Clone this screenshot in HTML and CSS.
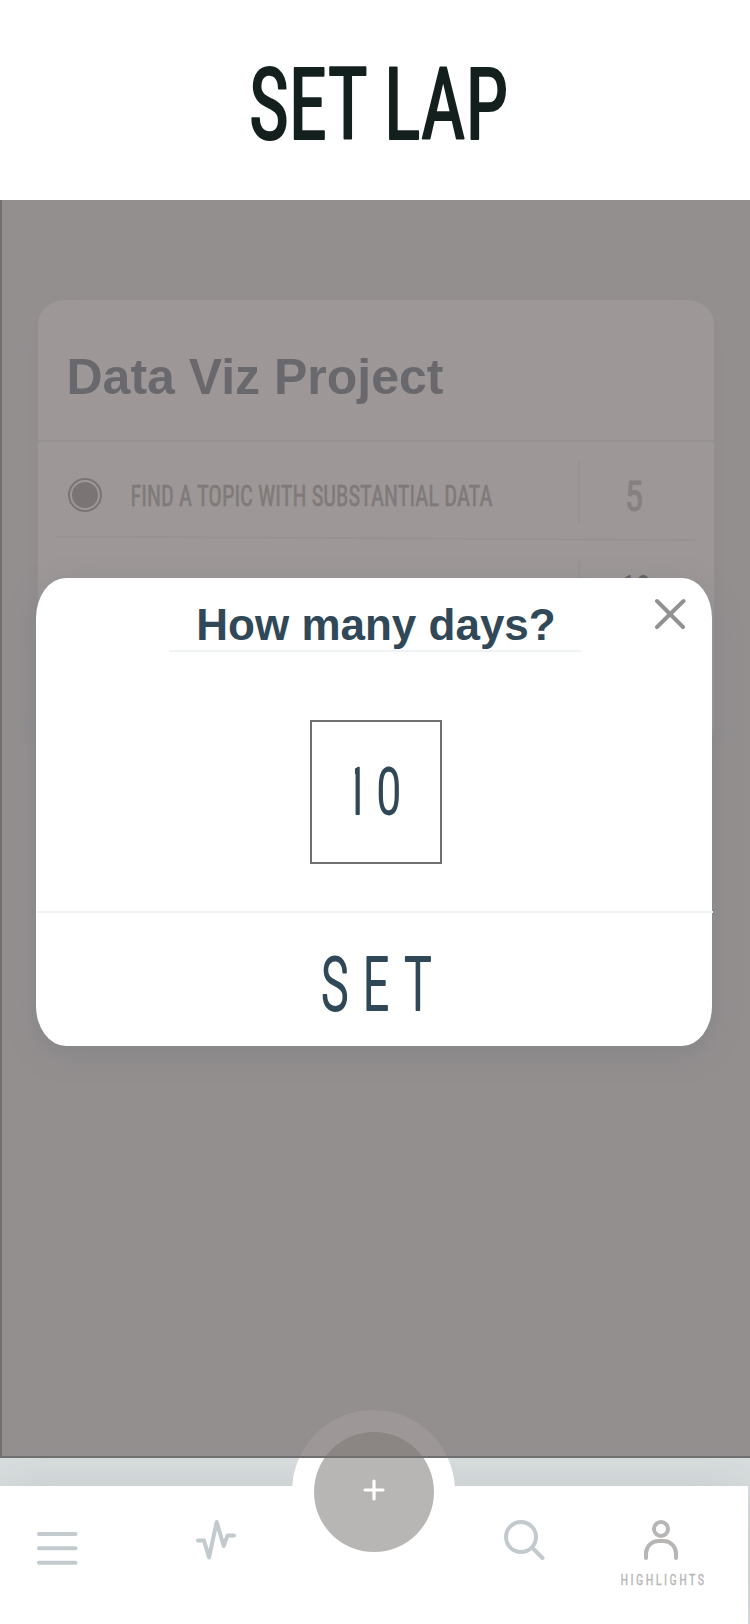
FILE: index.html
```
<!DOCTYPE html>
<html lang="en">
<head>
<meta charset="utf-8">
<title>Set Lap</title>
<link rel="stylesheet" href="styles.css">
</head>
<body>
<div class="screen">
  <header class="header">
    <svg class="label label-title" width="259" height="100" viewBox="0 0 259 100"><text x="0" y="89" textLength="259" lengthAdjust="spacingAndGlyphs">SET LAP</text></svg>
  </header>

  <main class="board">
    <section class="card">
      <h2 class="card-title">Data Viz Project</h2>
      <div class="row">
        <svg class="radio" width="34" height="34" viewBox="0 0 34 34"><circle cx="17" cy="17" r="16"/><circle class="dot" cx="17" cy="17" r="13"/></svg>
        <svg class="label label-task" width="364" height="34" viewBox="0 0 364 34"><text x="0.500" y="27.500" textLength="362" lengthAdjust="spacingAndGlyphs">FIND A TOPIC WITH SUBSTANTIAL DATA</text></svg>
        <div class="days"><svg class="label label-days" width="18" height="44" viewBox="0 0 18 44"><text x="-1" y="38" textLength="18" lengthAdjust="spacingAndGlyphs">5</text></svg></div>
      </div>
      <svg class="rule" width="640" height="6" viewBox="0 0 640 6"><path d="M0 0.500L640 4"/></svg>
      <div class="row row-next">
        <div class="days"><svg class="label label-days dark" width="30" height="44" viewBox="0 0 30 44"><text x="-2" y="36" textLength="31" lengthAdjust="spacingAndGlyphs">10</text></svg></div>
      </div>
    </section>
  </main>

  <nav class="nav">
    <svg class="icon menu" width="42" height="34" viewBox="0 0 42 34"><path d="M3 3H39.500M3 17.300H39.500M3 31.700H39.500"/></svg>
    <svg class="icon pulse" width="42" height="42" viewBox="0 0 42 42"><path d="M3 21.500H9L14 38.500L21.700 3L28.700 27L32.500 16.500H39"/></svg>
    <div class="fab">
      <div class="fab-button"><svg width="24" height="24" viewBox="0 0 24 24"><path d="M12 3V21M3 12H21"/></svg></div>
    </div>
    <svg class="icon search" width="42" height="42" viewBox="0 0 42 42"><circle cx="18" cy="18" r="15"/><path d="M29 28.500L39.500 39"/></svg>
    <div class="profile">
      <svg class="icon" width="36" height="42" viewBox="0 0 36 42"><circle cx="18" cy="10" r="7"/><path d="M3 39V34.500A12.500 12.500 0 0 1 15.500 22H20.500A12.500 12.500 0 0 1 33 34.500V39"/></svg>
      <svg class="label label-nav" width="86" height="18" viewBox="0 0 86 18"><text x="1.500" y="13" textLength="86" lengthAdjust="spacingAndGlyphs">HIGHLIGHTS</text></svg>
    </div>
  </nav>

  <div class="overlay">
    <section class="modal">
      <svg class="close" width="32" height="32" viewBox="0 0 32 32"><path d="M3 3L29 29M29.500 3L3 29"/></svg>
      <h2 class="modal-title">How many days?</h2>
      <div class="input">
        <svg class="label label-value" width="65" height="60" viewBox="0 0 65 60"><text x="0" y="52.500" textLength="65" lengthAdjust="spacingAndGlyphs">10</text></svg>
      </div>
      <div class="set">
        <svg class="label label-set" width="125" height="70" viewBox="0 0 125 70"><text x="0" y="61.500" textLength="125" lengthAdjust="spacingAndGlyphs">SET</text></svg>
      </div>
    </section>
  </div>
</div>
</body>
</html>
```
FILE: styles.css
```
* { box-sizing: border-box; }
body { margin: 0; background: #d9dedf; font-family: "Liberation Sans", Arial, sans-serif; }
svg { display: block; flex: none; }
h2 { margin: 0; }

.screen { position: relative; width: 750px; height: 1624px; overflow: hidden; display: flex; flex-direction: column; }
.header { height: 200px; background: #fff; display: flex; justify-content: center; padding: 50px 0 0 7px; }

.label { overflow: visible; font-family: "Roboto Condensed", Roboto, sans-serif; font-stretch: 75%; fill: currentColor; stroke: currentColor; stroke-linejoin: round; }
.label-title { color: #14201e; font-size: 100.500px; stroke-width: 2.200; }
.label-task { color: #888b89; font-size: 30px; stroke-width: .6; }
.label-days { color: #a2a6a4; font-size: 42px; stroke-width: 1; }
.label-days.dark { color: #14201e; font-size: 42px; stroke-width: 2; }
.label-value { color: #304857; font-size: 64px; font-weight: 300; letter-spacing: 10px; stroke-width: 1.800; clip-path: inset(0 0 0 11.500px); }
.label-set { color: #304857; font-size: 75px; font-weight: 300; letter-spacing: 20px; stroke-width: 2.200; }
.label-nav { color: #b8b6b5; font-size: 15px; letter-spacing: 3px; stroke-width: .3; }

.board { height: 1286px; flex: none; padding: 100px 36px 0 38px; }
.card { height: 453px; background: #fff; border-radius: 28px / 24px; box-shadow: 0 6px 30px rgba(70, 90, 90, .05); }
.card-title { height: 142px; border-bottom: 2px solid #e6ebeb; padding: 48px 0 0 28.500px; font-size: 50px; line-height: 58px; color: #304857; }
.row { height: 94px; display: flex; align-items: center; padding: 12px 0 0 30px; }
.radio { fill: none; stroke: #747474; stroke-width: 2; }
.radio .dot { fill: #747474; stroke: none; }
.label-task { margin-left: 28px; }
.days { width: 88px; height: 62px; margin-left: 84px; border-left: 2px solid #e6ebeb; display: flex; align-items: center; padding: 5px 0 0 46px; }
.row .days { margin-top: -6px; }
.rule { margin-left: 17px; fill: none; stroke: #e6ebeb; stroke-width: 2; }
.row-next { align-items: flex-start; padding: 17px 0 0 540px; }
.row-next .days { margin: 2px 0 0; padding: 0 0 0 42px; }

.nav { height: 138px; flex: none; width: 748px; background: #fff; position: relative; display: flex; align-items: flex-start; box-shadow: 0 0 50px rgba(50, 55, 60, .13); }
.icon { fill: none; stroke: #c3cacd; stroke-width: 4; stroke-linecap: round; stroke-linejoin: round; }
.menu { margin: 45px 0 0 36px; }
.pulse { margin: 33px 0 0 117px; }
.search { margin: 33px 0 0 47.500px; }
.profile { margin: 33px 0 0 74px; width: 86px; display: flex; flex-direction: column; align-items: center; }
.profile .icon { stroke: #b8b6b5; margin-right: 1px; }
.label-nav { margin-top: 11px; }
.fab { margin: -76px 0 0 55px; width: 163px; height: 163px; flex: none; border-radius: 50%; background: #fff; display: flex; align-items: center; justify-content: center; }
.fab-button { width: 120px; height: 120px; border-radius: 50%; background: #b8b6b5; display: flex; justify-content: center; padding-top: 46.500px; }
.fab-button svg { fill: none; stroke: #fff; stroke-width: 3.200; stroke-linecap: round; }

.overlay { position: absolute; left: 0; top: 200px; width: 750px; height: 1258px; border: solid #707070; border-width: 0 0 2px 2px; background: rgba(124, 116, 116, .75); padding: 378px 0 0 34px; }
.modal { position: relative; width: 676px; height: 468px; border-radius: 30px / 40px; background: #fff; box-shadow: 0 8px 28px rgba(112, 118, 128, .38); display: flex; flex-direction: column; align-items: center; }
.modal-title { width: 412px; height: 74px; margin-left: 2px; border-bottom: 2px solid #f0f3f3; text-align: center; font-size: 44px; line-height: 51px; padding: 21px 0 0 2px; color: #304857; }
.close { position: absolute; right: 26px; top: 20px; fill: none; stroke: #929292; stroke-width: 4; stroke-linecap: round; }
.input { width: 132px; height: 144px; margin: 68px 0 0 4px; border: 2px solid #707070; display: flex; padding: 39px 0 0 31.500px; }
.set { width: 676px; height: 136px; margin: 47px -1px 0 1px; border-top: 2px solid #f0f3f3; padding: 35px 0 0 284px; }
```
